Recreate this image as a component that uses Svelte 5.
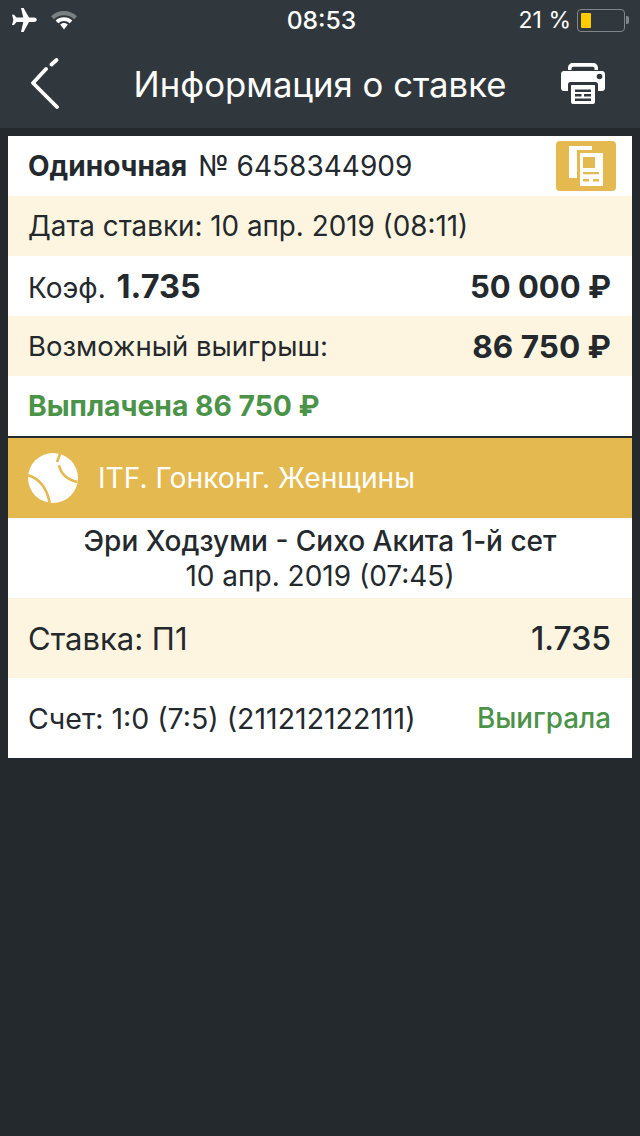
<script>
  const rows = { date: "Дата ставки: 10 апр. 2019 (08:11)" };
</script>

<div class="screen">
  <header class="top">
    <div class="status">
      <div class="status-left">
        <svg class="plane" viewBox="0 0 28 26" aria-hidden="true">
          <path d="M12 1h2.600l5.400 9.600h5c1.600 0 2.800 1 2.800 2.200s-1.200 2.300-2.800 2.300h-5L14.600 25H12l2.300-9.900H7.500L5 18H3l1.400-5.200L3 7.700h2l2.500 2.900h6.800z" fill="#fff" />
        </svg>
        <svg class="wifi" viewBox="0 0 28 20" aria-hidden="true">
          <path d="M14 1c5 0 9.500 2 13 5.300l-2.800 3A14.700 14.700 0 0 0 14 5.200 14.700 14.700 0 0 0 3.800 9.300L1 6.300A18.800 18.800 0 0 1 14 1z" fill="#7b8083" />
          <path d="M14 7.200c3.300 0 6.200 1.200 8.400 3.300l-2.700 2.800A8.300 8.300 0 0 0 14 11a8.300 8.300 0 0 0-5.700 2.300l-2.700-2.800A12.200 12.200 0 0 1 14 7.200z" fill="#fff" />
          <path d="M14 13c1.500 0 2.800.6 3.800 1.500L14 19.500l-3.800-5c1-.9 2.300-1.500 3.800-1.500z" fill="#fff" />
        </svg>
      </div>
      <div class="clock">08:53</div>
      <div class="status-right">
        <span>21 %</span>
        <div class="battery"><div class="charge" style="width: 10px"></div></div>
        <div class="nub"></div>
      </div>
    </div>
    <nav class="nav">
      <svg class="back" viewBox="0 0 30 52" aria-hidden="true">
        <path d="M25.500 2 20.500 6.500M15 11 2 25 26 49" fill="none" stroke="#fff" stroke-width="3.800" stroke-linecap="round" stroke-linejoin="round" />
      </svg>
      <h1>Информация о ставке</h1>
      <svg class="printer" viewBox="0 0 44 42" aria-hidden="true">
        <path d="M7 8V6c0-3 2-5 5-5h20c3 0 5 2 5 5v2h-3.500V6.500c0-1-.7-1.700-1.700-1.700H12.200c-1 0-1.700.7-1.700 1.700V8z" fill="#fff" />
        <path d="M3 9h38c1.700 0 3 1.300 3 3v14c0 1.700-1.300 3-3 3h-4v-6.500c0-1.400-1.100-2.500-2.500-2.500h-25A2.500 2.500 0 0 0 7 22.500V29H3c-1.700 0-3-1.300-3-3V12c0-1.700 1.300-3 3-3z" fill="#fff" />
        <circle cx="38.500" cy="14.500" r="2.800" fill="#30383e" />
        <path d="M11 23h22c.6 0 1 .4 1 1v16c0 1.100-.9 2-2 2H12c-1.100 0-2-.9-2-2V24c0-.6.4-1 1-1z" fill="#fff" />
        <path d="M14 27.500h16v2.400H14zM14 32h6.500v2.400H14zM23 32h7v2.400h-7zM14 36.500h16v2.400H14z" fill="#30383e" />
      </svg>
    </nav>
  </header>

  <main class="card">
    <div class="row">
      <div class="title"><b>Одиночная</b> № 6458344909</div>
      <div class="copy">
        <svg viewBox="0 0 60 50" aria-hidden="true">
          <path d="M13 5h23v4H21v28h-8z" fill="#fff" />
          <path d="M24 12h23v33H24z" fill="#fff" />
          <path d="M27 16h12v11H27z" fill="#e4b94f" />
          <path d="M27 31h16v2.200H27zM27 38h6v2.500h-6zM37 38h6v2.500h-6z" fill="#e4b94f" />
        </svg>
      </div>
    </div>
    <div class="row alt date">{rows.date}</div>
    <div class="row">
      <div class="coef">Коэф. <b>1.735</b></div>
      <b class="sum stake-sum">50 000 ₽</b>
    </div>
    <div class="row alt">
      <span class="label">Возможный выигрыш:</span>
      <b class="sum">86 750 ₽</b>
    </div>
    <div class="row paid">Выплачена 86 750 ₽</div>

    <div class="league">
      <svg viewBox="0 0 50 50" aria-hidden="true">
        <circle cx="25" cy="25" r="25" fill="#fff" />
        <path d="M32 1 29 9M31 12.300C33 21 40 27 49.500 29M0 22.300C11 25 19 35 21.700 50" fill="none" stroke="#e4b94f" stroke-width="2.600" />
      </svg>
      <span>ITF. Гонконг. Женщины</span>
    </div>

    <div class="match">
      <div class="teams">Эри Ходзуми - Сихо Акита 1-й сет</div>
      <div>10 апр. 2019 (07:45)</div>
    </div>
    <div class="row alt tall stake">
      <span>Ставка: П1</span>
      <span class="odd">1.735</span>
    </div>
    <div class="row tall score">
      <span class="score-text">Счет: 1:0 (7:5) (211212122111)</span>
      <span class="won">Выиграла</span>
    </div>
  </main>
</div>

<style>
  :global(body) {
    margin: 0;
    background: #23292d;
  }

  .screen {
    display: flex;
    flex-direction: column;
    min-height: 1136px;
    font-family: Inter, "Noto Sans", sans-serif;
    color: #23292d;
  }

  .top {
    background: #30383e;
    color: #fff;
  }

  .status {
    height: 40px;
    display: grid;
    grid-template-columns: 1fr auto 1fr;
    align-items: center;
    padding: 0 11px 0 9px;
    font-size: 24.700px;
  }

  .status-left {
    display: flex;
    align-items: center;
    gap: 13px;
  }

  .plane {
    width: 28px;
    height: 26px;
  }

  .wifi {
    width: 28px;
    height: 20px;
  }

  .clock {
    font-weight: 500;
    margin-left: 5px;
  }

  .status-right {
    display: flex;
    align-items: center;
    justify-content: flex-end;
    font-size: 23px;
  }

  .battery {
    box-sizing: border-box;
    width: 48px;
    height: 23px;
    margin-left: 6px;
    padding: 3px;
    border: 1.5px solid #81868a;
    border-radius: 4px;
  }

  .charge {
    height: 100%;
    background: #fecb00;
    border-radius: 1px;
  }

  .nub {
    width: 3px;
    height: 8px;
    margin-left: 1px;
    background: #81868a;
    border-radius: 0 2px 2px 0;
  }

  .nav {
    height: 88px;
    display: grid;
    grid-template-columns: 1fr auto 1fr;
    align-items: center;
    padding: 0 31px;
  }

  .nav h1 {
    margin: 0;
    font-size: 34.700px;
    font-weight: 400;
    white-space: nowrap;
  }

  .back {
    width: 30px;
    height: 52px;
  }

  .printer {
    width: 44px;
    height: 42px;
    justify-self: end;
    margin: 0 4px 3px 0;
  }

  .card {
    margin: 8px 8px 0;
    background: #fff;
    font-size: 28px;
  }

  .row {
    height: 60px;
    box-sizing: border-box;
    display: flex;
    align-items: center;
    justify-content: space-between;
    padding: 0 21px 0 20px;
    white-space: nowrap;
  }

  .alt {
    background: #fef5e0;
  }

  .tall {
    height: 80px;
  }

  .title b {
    font-weight: 700;
    margin-right: 3px;
  }

  .date {
    font-size: 27.800px;
  }

  .label {
    font-size: 27.500px;
  }

  .copy {
    width: 60px;
    height: 50px;
    margin-right: -5px;
    background: #e4b94f;
    border-radius: 4px;
  }

  .copy svg {
    display: block;
    width: 60px;
    height: 50px;
  }

  .coef b {
    font-size: 32.500px;
    margin-left: 3px;
  }

  .sum {
    font-size: 31.500px;
    font-weight: 700;
  }

  .stake-sum {
    font-size: 31px;
  }

  .paid {
    color: #4c934a;
    font-weight: 700;
    font-size: 28.300px;
  }

  .league {
    height: 80px;
    border-top: 2px solid #23292d;
    display: flex;
    align-items: center;
    gap: 20px;
    padding: 0 20px;
    background: #e4b94f;
    color: #fff;
    font-size: 28.200px;
  }

  .league svg {
    width: 50px;
    height: 50px;
    flex: none;
  }

  .match {
    height: 80px;
    display: flex;
    flex-direction: column;
    align-items: center;
    justify-content: center;
    gap: 1px;
    text-align: center;
  }

  .teams {
    font-weight: 500;
  }

  .stake {
    font-size: 31px;
  }

  .odd {
    font-weight: 500;
    font-size: 32px;
  }

  .score-text {
    font-size: 28.500px;
  }

  .won {
    color: #4c934a;
    font-weight: 500;
    font-size: 27.800px;
  }
</style>
